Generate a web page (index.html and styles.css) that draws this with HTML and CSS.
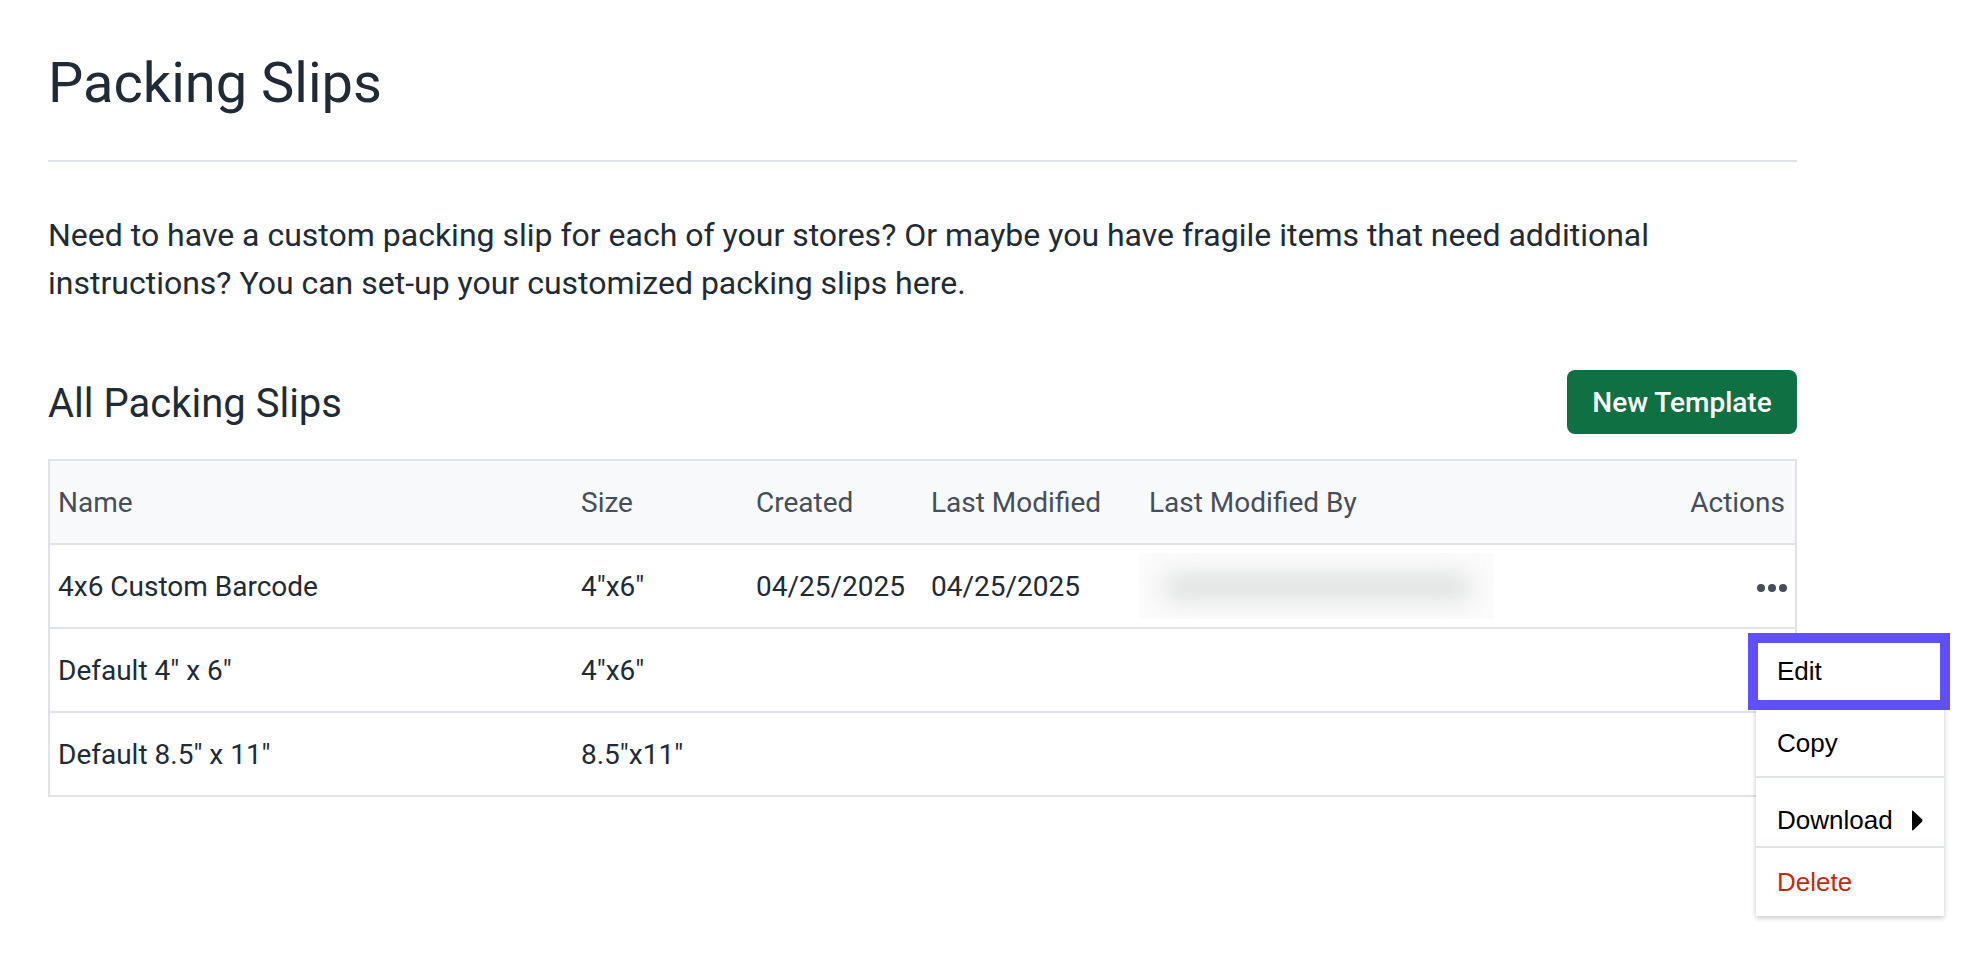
FILE: index.html
```html
<!DOCTYPE html>
<html lang="en">
<head>
<meta charset="utf-8">
<title>Packing Slips</title>
<link rel="stylesheet" href="styles.css">
</head>
<body>
<div class="page">
  <h1 class="title">Packing Slips</h1>
  <hr class="rule">
  <p class="intro">Need to have a custom packing slip for each of your stores? Or maybe you have fragile items that need additional instructions? You can set-up your customized packing slips here.</p>

  <div class="section-head">
    <h2 class="section-title">All Packing Slips</h2>
    <button class="btn-primary" type="button">New Template</button>
  </div>

  <div class="table">
    <div class="row head">
      <div class="cell">Name</div>
      <div class="cell">Size</div>
      <div class="cell">Created</div>
      <div class="cell">Last Modified</div>
      <div class="cell">Last Modified By</div>
      <div class="cell actions">Actions</div>
    </div>
    <div class="row">
      <div class="cell">4x6 Custom Barcode</div>
      <div class="cell">4"x6"</div>
      <div class="cell">04/25/2025</div>
      <div class="cell">04/25/2025</div>
      <div class="cell"><span class="redacted"><span class="redacted-bar"></span></span></div>
      <div class="cell actions"><span class="dots"><i></i><i></i><i></i></span></div>
    </div>
    <div class="row">
      <div class="cell">Default 4" x 6"</div>
      <div class="cell">4"x6"</div>
      <div class="cell"></div>
      <div class="cell"></div>
      <div class="cell"></div>
      <div class="cell actions"></div>
    </div>
    <div class="row">
      <div class="cell">Default 8.5" x 11"</div>
      <div class="cell">8.5"x11"</div>
      <div class="cell"></div>
      <div class="cell"></div>
      <div class="cell"></div>
      <div class="cell actions"></div>
    </div>
  </div>

  <div class="menu">
    <div class="menu-item item-edit">Edit</div>
    <div class="menu-item item-copy">Copy</div>
    <div class="menu-item item-download">Download
      <svg class="caret" width="12" height="21" viewBox="0 0 12 21"><path d="M1 1.6 Q1 0 2.4 0.9 L11 9.3 Q12 10.5 11 11.7 L2.4 20.1 Q1 21 1 19.4 Z" fill="#000"/></svg>
    </div>
    <div class="menu-item item-delete">Delete</div>
  </div>
  <div class="focus-ring"></div>
</div>
</body>
</html>
```
FILE: styles.css
```css
* { box-sizing: border-box; }

html, body {
  margin: 0;
  padding: 0;
  background: #ffffff;
}

body {
  font-family: Roboto, "Noto Sans", Arial, sans-serif;
  color: #212b36;
}

.page {
  position: relative;
  padding: 50px 177px 0 48px;
  min-height: 968px;
}

.title {
  margin: 0;
  font-size: 56px;
  line-height: 67px;
  font-weight: 400;
  color: #212b36;
}

.rule {
  border: 0;
  height: 2px;
  background: #dfe3e8;
  margin: 43px 0 0;
}

.intro {
  margin: 49px 0 0;
  max-width: 1700px;
  font-size: 32px;
  line-height: 48px;
  color: #212b36;
}

.section-head {
  display: flex;
  justify-content: space-between;
  align-items: center;
  margin-top: 63px;
}

.section-title {
  margin: 0;
  font-size: 40px;
  line-height: 48px;
  font-weight: 400;
  color: #212b36;
  position: relative;
  top: 2px;
}

.btn-primary {
  width: 230px;
  height: 64px;
  border: 0;
  border-radius: 8px;
  background: #0f7043;
  color: #ffffff;
  font-family: Roboto, Arial, sans-serif;
  font-weight: 500;
  font-size: 28px;
  padding: 0;
}

.table {
  margin-top: 25px;
  border: 2px solid #dfe3e8;
  border-bottom: 0;
}

.row {
  display: grid;
  grid-template-columns: 523px 175px 175px 218px 1fr 200px;
  align-items: center;
  height: 84px;
  border-bottom: 2px solid #dfe3e8;
  font-size: 28px;
  color: #212b36;
}

.row.head {
  background: #f8f9fa;
  color: #454f5b;
}

.cell {
  padding-left: 8px;
  white-space: nowrap;
}

.cell.actions {
  text-align: right;
  padding-right: 10px;
}

.dots {
  display: inline-flex;
  gap: 3px;
  margin-right: -2px;
  position: relative;
  top: -4px;
}

.dots i {
  display: block;
  width: 8px;
  height: 8px;
  border-radius: 50%;
  background: #454f5b;
}

.redacted {
  display: block;
  width: 355px;
  height: 66px;
  margin-left: -10px;
  background: #fbfbfb;
  position: relative;
  overflow: hidden;
}

.redacted-bar {
  position: absolute;
  left: 24px;
  right: 22px;
  top: 20px;
  height: 28px;
  background: #e0e2e2;
  border-radius: 14px;
  filter: blur(11px);
}

.menu {
  position: absolute;
  left: 1756px;
  top: 636px;
  width: 188px;
  background: #ffffff;
  box-shadow: 0 2px 5px rgba(0, 0, 0, 0.22);
  font-family: "Liberation Sans", Arial, sans-serif;
  font-size: 26px;
  color: #000000;
}

.menu-item {
  display: flex;
  align-items: center;
  padding-left: 21px;
}

.item-edit {
  height: 74px;
  padding-bottom: 4px;
}

.item-copy {
  height: 68px;
  border-bottom: 2px solid #dfe3e8;
}

.item-download {
  height: 70px;
  padding-top: 16px;
  border-bottom: 2px solid #dfe3e8;
}

.caret {
  margin-left: 18px;
}

.item-delete {
  height: 68px;
  color: #c4290f;
}

.focus-ring {
  position: absolute;
  left: 1748px;
  top: 633px;
  width: 202px;
  height: 77px;
  border: 10px solid #5e50ff;
}
```
